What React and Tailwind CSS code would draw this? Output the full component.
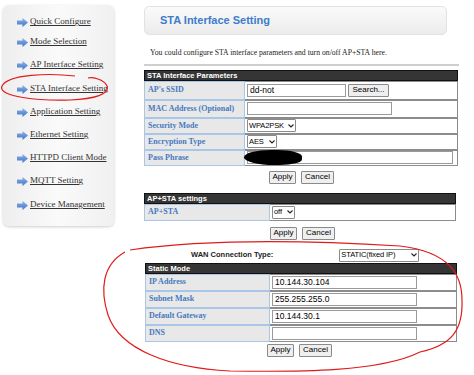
import React from 'react';

const menu = [
  ['Quick Configure', 'mt-0'],
  ['Mode Selection', 'mt-[4px]'],
  ['AP Interface Setting', 'mt-[7px]'],
  ['STA Interface Setting', 'mt-[8px]'],
  ['Application Setting', 'mt-[7px]'],
  ['Ethernet Setting', 'mt-[7px]'],
  ['HTTPD Client Mode', 'mt-[7px]'],
  ['MQTT Setting', 'mt-[7px]'],
  ['Device Management', 'mt-[8px]'],
];

function Arrow() {
  return (
    <svg width="11" height="9" viewBox="0 0 11 9" className="shrink-0">
      <defs>
        <linearGradient id="ar" x1="0" y1="0" x2="0" y2="1">
          <stop offset="0" stopColor="#8fb4ea" />
          <stop offset="1" stopColor="#3f74c8" />
        </linearGradient>
      </defs>
      <polygon points="0,2.5 5.5,2.5 5.5,0 11,4.5 5.5,9 5.5,6.5 0,6.5" fill="url(#ar)" />
    </svg>
  );
}

function Label({ children, w = 'w-[101px]' }) {
  return (
    <div className={`${w} shrink-0 bg-[#e8e8e8] border border-[#a9c6e6] flex items-center pl-[3px] text-[8px] font-bold text-[#4779bd] font-['Liberation_Serif',serif]`}>
      {children}
    </div>
  );
}

function Value({ children }) {
  return (
    <div className="flex-1 border border-[#8c8c8c] border-l-0 bg-white flex items-center pl-[2px] gap-[2px]">
      {children}
    </div>
  );
}

function Input({ w, value = '' }) {
  return (
    <div className={`${w} h-[13px] border border-[#9a9a9a] bg-white text-[8.5px] leading-[11px] px-[2px] font-['Liberation_Sans',sans-serif] text-black`}>
      {value}
    </div>
  );
}

function Select({ w, value }) {
  return (
    <div className={`${w} h-[13px] border border-[#8a8a8a] bg-white rounded-[1px] flex items-center justify-between pl-[1px] pr-[1px] text-[7.5px] tracking-[-0.1px] font-['Liberation_Sans',sans-serif] text-black`}>
      <span className="whitespace-nowrap">{value}</span>
      <svg width="6" height="4" viewBox="0 0 6 4" className="shrink-0"><path d="M0.5 0.5 L3 3 L5.5 0.5" stroke="#222" strokeWidth="1.1" fill="none" /></svg>
    </div>
  );
}

function Btn({ children, w }) {
  return (
    <div className={`${w} h-[13px] border border-[#8a8a8a] bg-[#efefef] rounded-[1px] flex items-center justify-center text-[8px] font-['Liberation_Sans',sans-serif] text-black`}>
      {children}
    </div>
  );
}

function Header({ children }) {
  return (
    <div className="h-[11px] bg-[#353535] border border-[#111] text-white text-[7.5px] font-bold leading-[9px] pl-[2px] font-['Liberation_Sans',sans-serif]">
      {children}
    </div>
  );
}

function Buttons({ ml }) {
  return (
    <div className={`flex gap-[5px] ${ml}`}>
      <Btn w="w-[27px]">Apply</Btn>
      <Btn w="w-[33px]">Cancel</Btn>
    </div>
  );
}

export default function App() {
  return (
    <div className="relative w-[474px] h-[375px] bg-white overflow-hidden flex">
      {/* Sidebar */}
      <div className="ml-[3px] mt-[5px] w-[111px] h-[221px] rounded-[6px] bg-gradient-to-r from-[#eeeeee] via-[#fafafa] to-[#f0f0f0] shadow-[0_1px_3px_rgba(0,0,0,0.2)] pt-[9px]">
        {menu.map(([m, mt]) => (
          <div
            key={m}
            className={`flex items-center gap-[2px] pl-[14px] h-[16px] ${mt} text-[9px] text-[#333] underline font-['Liberation_Serif',serif]`}
          >
            <Arrow />
            <span>{m}</span>
          </div>
        ))}
      </div>

      {/* Main */}
      <div className="ml-[30px] w-[318px] flex flex-col font-['Liberation_Sans',sans-serif]">
        <div className="mt-[6px] w-[303px] h-[29px] rounded-[5px] border border-[#e2e2e2] bg-gradient-to-b from-[#fafafa] to-[#ececec] flex items-center pl-[15px] text-[11px] font-bold text-[#3d7ccb]">
          STA Interface Setting
        </div>
        <div className="mt-[12px] pl-[6px] text-[7.7px] text-[#222] font-['Liberation_Serif',serif]">
          You could configure STA interface parameters and turn on/off AP+STA here.
        </div>
        <div className="mt-[5px] w-[315px] h-[2px] bg-[#cfcfcf]" />

        {/* STA params */}
        <div className="mt-[4px] w-[314px]">
          <Header>STA Interface Parameters</Header>
          <div className="flex h-[19px]">
            <Label>AP's SSID</Label>
            <Value>
              <Input w="w-[99px]" value="dd-not" />
              <Btn w="w-[41px]">Search...</Btn>
            </Value>
          </div>
          <div className="flex h-[18px]">
            <Label>MAC Address (Optional)</Label>
            <Value><Input w="w-[145px]" /></Value>
          </div>
          <div className="flex h-[16px]">
            <Label>Security Mode</Label>
            <Value><Select w="w-[49px]" value="WPA2PSK" /></Value>
          </div>
          <div className="flex h-[16px]">
            <Label>Encryption Type</Label>
            <Value><Select w="w-[30px]" value="AES" /></Value>
          </div>
          <div className="flex h-[16px]">
            <Label>Pass Phrase</Label>
            <Value>
              <div className="relative w-[206px] h-[13px] border border-[#9a9a9a] bg-white">
                <div className="absolute left-[-4px] top-[-2px] w-[58px] h-[15px] bg-black rounded-[50%_45%_40%_55%]" />
              </div>
            </Value>
          </div>
        </div>
        <div className="mt-[5px]">
          <Buttons ml="ml-[125px]" />
        </div>

        {/* AP+STA */}
        <div className="mt-[9px] w-[312px]">
          <Header>AP+STA settings</Header>
          <div className="flex h-[17px]">
            <Label w="w-[126px]">AP+STA</Label>
            <Value><Select w="w-[23px]" value="off" /></Value>
          </div>
        </div>
        <div className="mt-[6px]">
          <Buttons ml="ml-[126px]" />
        </div>

        {/* WAN */}
        <div className="mt-[9px] flex items-center h-[13px]">
          <span className="ml-[47px] text-[7.5px] font-bold text-[#222]">WAN Connection Type:</span>
          <div className="ml-[66px]">
            <Select w="w-[80px]" value="STATIC(fixed IP)" />
          </div>
        </div>
        <div className="mt-[1px] w-[312px] ml-[1px]">
          <Header>Static Mode</Header>
          {[
            ['IP Address', '10.144.30.104'],
            ['Subnet Mask', '255.255.255.0'],
            ['Default Gateway', '10.144.30.1'],
            ['DNS', ''],
          ].map(([l, v]) => (
            <div key={l} className="flex h-[17px]">
              <Label w="w-[125px]">{l}</Label>
              <Value><Input w="w-[145px]" value={v} /></Value>
            </div>
          ))}
        </div>
        <div className="mt-[2px]">
          <Buttons ml="ml-[123px]" />
        </div>
      </div>

      {/* red annotations */}
      <svg className="absolute left-0 top-0 pointer-events-none" width="474" height="375" viewBox="0 0 474 375">
        <path
          d="M75 76 C 50 73, 8 74, 2 86 C -3 97, 40 101, 70 100 C 95 99, 110 94, 107 86 C 104 79, 92 77, 88 78"
          stroke="#e01b1b" strokeWidth="1.2" fill="none"
        />
        <path
          d="M130 250 C 200 240, 300 240, 400 246 C 450 252, 462 275, 462 300 C 463 330, 452 345, 420 352 C 380 372, 300 372, 230 371 C 170 368, 120 350, 108 315 C 100 290, 102 265, 125 252"
          stroke="#e01b1b" strokeWidth="1.2" fill="none"
        />
      </svg>
    </div>
  );
}
